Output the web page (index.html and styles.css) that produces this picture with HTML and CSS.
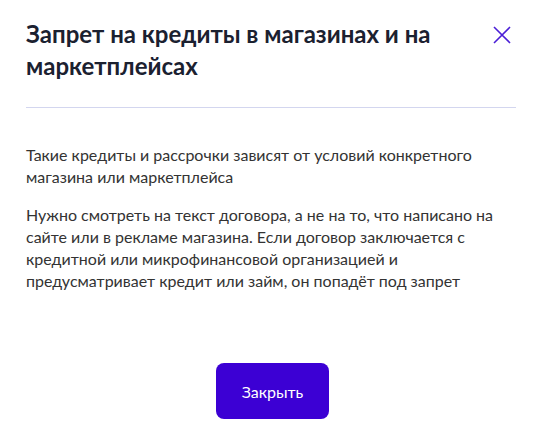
FILE: index.html
```html
<!DOCTYPE html>
<html lang="ru">
<head>
    <meta charset="UTF-8">
    <meta name="viewport" content="width=device-width, initial-scale=1.0">
    <title>Запрет на кредиты</title>
    <link rel="stylesheet" href="styles.css">
</head>
<body>

<div class="modal">
    <div class="modal-header">
        <h2>Запрет на кредиты в магазинах и на маркетплейсах</h2>
        <a href="#" class="close-icon" aria-label="Закрыть">
            <svg width="20" height="20" viewBox="0 0 20 20">
                <path d="M2 2 L18 18 M18 2 L2 18" stroke="#4b1fd6" stroke-width="1.6" fill="none"/>
            </svg>
        </a>
    </div>
    <hr class="divider">
    <div class="modal-body">
        <p>Такие кредиты и рассрочки зависят от условий конкретного магазина или маркетплейса</p>
        <p>Нужно смотреть на текст договора, а не на то, что написано на сайте или в рекламе магазина. Если договор заключается с кредитной или микрофинансовой организацией и предусматривает кредит или займ, он попадёт под запрет</p>
    </div>
    <div class="modal-footer">
        <button type="button" class="close-btn">Закрыть</button>
    </div>
</div>

</body>
</html>
```

FILE: styles.css
```css
body {
    font-family: Lato, "Noto Sans", sans-serif;
    background-color: #ffffff;
    margin: 0;
}
.modal {
    padding: 18px 29px 0 26px;
}
.modal-header {
    display: flex;
    justify-content: space-between;
    align-items: flex-start;
}
.modal-header h2 {
    margin: 0;
    font-size: 24px;
    line-height: 32px;
    font-weight: 700;
    color: #1b2130;
    max-width: 420px;
}
.close-icon {
    display: block;
    margin-top: 7px;
    margin-right: 4px;
}
.close-icon svg {
    display: block;
}
.divider {
    border: 0;
    height: 1px;
    background: #d3d6ef;
    margin: 25px 0 36px 0;
}
.modal-body {
    max-width: 480px;
}
.modal-body p {
    margin: 0 0 16px 0;
    font-size: 16px;
    line-height: 22px;
    color: #333333;
}
.modal-footer {
    display: flex;
    justify-content: center;
    margin-top: 71px;
    padding-left: 3px;
}
.close-btn {
    width: 113px;
    height: 56px;
    border: 0;
    border-radius: 8px;
    background: #3c00d4;
    color: #ffffff;
    font-family: Lato, "Noto Sans", sans-serif;
    font-size: 16px;
    cursor: pointer;
}
```
